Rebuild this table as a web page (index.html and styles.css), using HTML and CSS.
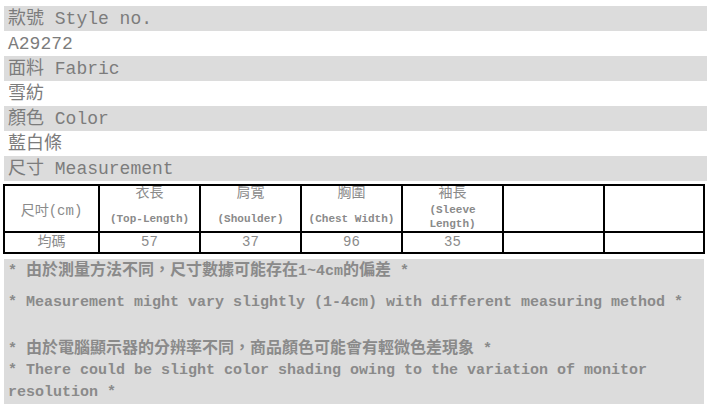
FILE: index.html
```html
<!DOCTYPE html>
<html lang="zh-Hant">
<head>
<meta charset="utf-8">
<title>Product spec</title>
<link rel="stylesheet" href="styles.css">
</head>
<body>
<div class="page">
  <div class="info">
    <div class="row label">款號 Style no.</div>
    <div class="row value">A29272</div>
    <div class="row label">面料 Fabric</div>
    <div class="row value">雪紡</div>
    <div class="row label">顏色 Color</div>
    <div class="row value">藍白條</div>
    <div class="row label">尺寸 Measurement</div>
  </div>

  <table class="size">
    <colgroup>
      <col class="c-first"><col class="c"><col class="c"><col class="c"><col class="c"><col class="c"><col class="c-last">
    </colgroup>
    <tr class="head">
      <td class="rowhead">尺吋(cm)</td>
      <td><div class="zh">衣長</div><div class="en one">(Top-Length)</div></td>
      <td><div class="zh">肩寬</div><div class="en one">(Shoulder)</div></td>
      <td><div class="zh">胸圍</div><div class="en one">(Chest Width)</div></td>
      <td><div class="zh">袖長</div><div class="en two">(Sleeve Length)</div></td>
      <td></td>
      <td></td>
    </tr>
    <tr class="data">
      <td>均碼</td>
      <td>57</td>
      <td>37</td>
      <td>96</td>
      <td>35</td>
      <td></td>
      <td></td>
    </tr>
  </table>

  <div class="notes">
    <p class="n1">* <span class="cjk">由於測量方法不同，尺寸數據可能存在</span>1~4cm<span class="cjk">的偏差</span> *</p>
    <p class="n2">* Measurement might vary slightly (1-4cm) with different measuring method *</p>
    <p class="n3">* <span class="cjk">由於電腦顯示器的分辨率不同，商品顏色可能會有輕微色差現象</span> *</p>
    <p class="n4">* There could be slight color shading owing to the variation of monitor resolution *</p>
  </div>
</div>
</body>
</html>
```

FILE: styles.css
```css
html, body {
  margin: 0;
  padding: 0;
  background: #ffffff;
}

.page {
  padding-top: 6px;
  font-family: "Liberation Mono", "Noto Sans CJK TC", monospace;
}

.info {
  margin-left: 4px;
}

.row {
  height: 25px;
  line-height: 26px;
  padding-left: 4px;
  font-size: 18px;
  color: #7c7c7c;
  white-space: nowrap;
}

.row.label {
  background: #dcdcdc;
}

.row.value {
  background: #ffffff;
}

.size {
  margin-top: 3px;
  margin-left: 3px;
  width: 701px;
  border-collapse: collapse;
  table-layout: fixed;
  font-family: "Liberation Mono", "Noto Sans CJK TC", monospace;
  color: #8a8a8a;
}

.c-first { width: 95px; }
.c { width: 101px; }
.c-last { width: 100px; }

.size td {
  border: 2px solid #000000;
  padding: 0;
  text-align: center;
  vertical-align: top;
  overflow: hidden;
}

.head td {
  height: 45px;
}

.head td.rowhead {
  vertical-align: middle;
  font-size: 14px;
}

.zh {
  font-size: 14px;
  line-height: 15px;
}

.en {
  font-size: 11px;
  line-height: 14px;
  font-weight: bold;
}

.en.one {
  margin-top: 11px;
}

.en.two {
  margin-top: 2px;
  padding: 0 10px;
}

.data td {
  height: 19px;
  font-size: 14px;
  line-height: 19px;
  vertical-align: middle;
}

.notes {
  margin-top: 5px;
  margin-left: 4px;
  width: 696px;
  padding: 2px 0 2px 4px;
  background: #dcdcdc;
  color: #8a8a8a;
  font-size: 15px;
  font-weight: bold;
}

.notes p {
  margin: 0;
  line-height: 21px;
}

.notes .cjk {
  font-size: 16px;
}

.n2 { margin-top: 10px !important; }
.n3 { margin-top: 26px !important; }
.n4 { line-height: 21.5px !important; }
```
